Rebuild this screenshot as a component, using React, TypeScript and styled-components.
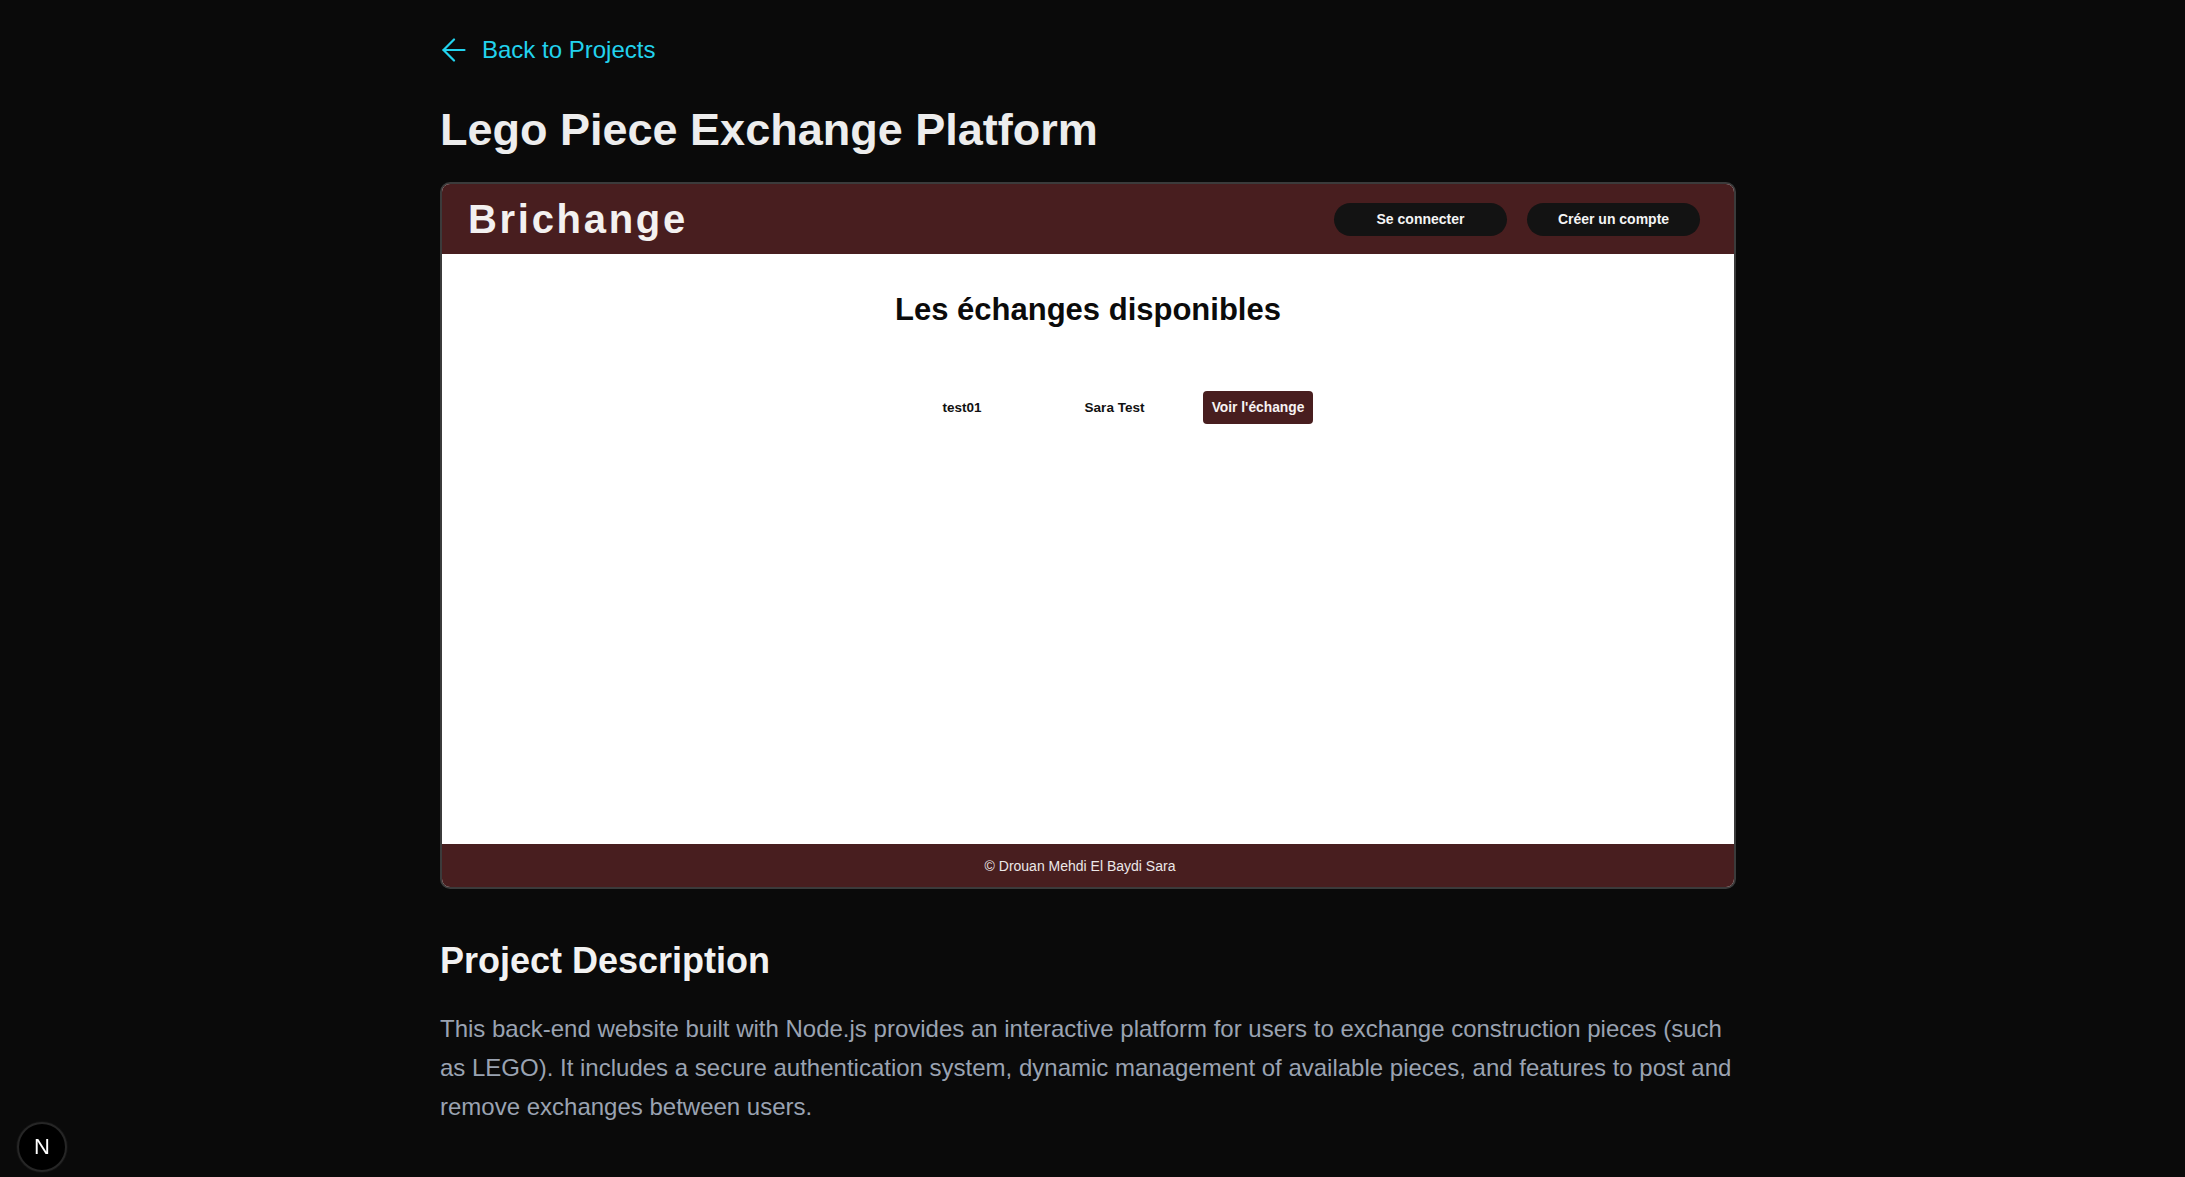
import React from "react";
import styled, { createGlobalStyle } from "styled-components";

const Global = createGlobalStyle`
  html, body { margin: 0; padding: 0; background: #0a0a0a; }
  body { font-family: "Liberation Sans", Arial, sans-serif; color: #ededed; }
  * { box-sizing: border-box; }
`;

const Page = styled.div`
  min-height: 1177px;
  padding: 33px 0 40px 440px;
  background: #0a0a0a;
`;

const Main = styled.main`
  width: 1296px;
  display: flex;
  flex-direction: column;
`;

const BackLink = styled.a`
  display: inline-flex;
  align-items: center;
  gap: 16px;
  align-self: flex-start;
  color: #22d3ee;
  font-size: 24px;
  line-height: 33px;
  text-decoration: none;
  cursor: pointer;
  svg { margin-left: 2px; }
`;

const Title = styled.h1`
  margin: 40px 0 28px;
  font-size: 45px;
  line-height: 48px;
  font-weight: 700;
  color: #ededed;
`;

const Preview = styled.div`
  width: 1296px;
  height: 707px;
  border: 2px solid #3b3b3b;
  border-radius: 10px;
  overflow: hidden;
  display: flex;
  flex-direction: column;
  background: #ffffff;
`;

const SiteHeader = styled.header`
  height: 70px;
  background: #481e1f;
  display: flex;
  align-items: center;
  justify-content: space-between;
  padding: 0 34px 0 26px;
`;

const Logo = styled.div`
  font-size: 40px;
  font-weight: 700;
  letter-spacing: 2.7px;
  color: #f3f1f0;
`;

const Nav = styled.nav`
  display: flex;
  gap: 20px;
`;

const PillButton = styled.button`
  width: 173px;
  height: 33px;
  border: none;
  border-radius: 17px;
  background: #131313;
  color: #f5f5f5;
  font-family: "Liberation Sans", Arial, sans-serif;
  font-size: 14px;
  font-weight: 700;
  cursor: pointer;
`;

const SiteBody = styled.section`
  flex: 1;
  background: #ffffff;
  padding-top: 37px;
  display: flex;
  flex-direction: column;
  align-items: center;
`;

const SiteTitle = styled.h2`
  margin: 0;
  font-size: 31px;
  line-height: 38px;
  font-weight: 700;
  color: #0b0b0b;
`;

const ExchangeRow = styled.div`
  margin-top: 62px;
  display: grid;
  grid-template-columns: 153px 152px 135px;
  justify-items: center;
  align-items: center;
  padding-left: 35px;
  font-size: 13.5px;
  font-weight: 700;
  color: #111;
`;

const Cell = styled.span``;

const ViewButton = styled.button`
  height: 33px;
  padding: 0 9px;
  border: none;
  border-radius: 4px;
  background: #481e1f;
  color: #f7f3f3;
  font-family: "Liberation Sans", Arial, sans-serif;
  font-size: 13.8px;
  font-weight: 700;
  cursor: pointer;
`;

const SiteFooter = styled.footer`
  height: 43px;
  background: #481e1f;
  color: #ece8e8;
  font-size: 14px;
  display: flex;
  align-items: center;
  justify-content: center;
  padding-right: 16px;
`;

const SectionTitle = styled.h2`
  margin: 52px 0 28px;
  font-size: 36px;
  line-height: 40px;
  font-weight: 700;
  color: #f2f2f2;
`;

const Description = styled.p`
  margin: 0;
  font-size: 24px;
  line-height: 39px;
  color: #9aa3b2;
`;

const DevBadge = styled.div`
  position: fixed;
  left: 17px;
  bottom: 5px;
  width: 50px;
  height: 50px;
  border-radius: 50%;
  background: #000;
  border: 2px solid #262626;
  box-shadow: 0 0 0 1px #111;
  display: flex;
  align-items: center;
  justify-content: center;
  color: #fff;
  font-size: 22px;
  font-weight: 400;
`;

export default function App() {
  return (
    <>
      <Global />
      <Page>
        <Main>
          <BackLink>
            <svg width="24" height="24" viewBox="0 0 24 24" fill="none" stroke="currentColor" strokeWidth="2.2" strokeLinecap="round" strokeLinejoin="round">
              <path d="M22.5 12H1.5" />
              <path d="M12 22.5 1.5 12 12 1.5" />
            </svg>
            Back to Projects
          </BackLink>
          <Title>Lego Piece Exchange Platform</Title>
          <Preview>
            <SiteHeader>
              <Logo>Brichange</Logo>
              <Nav>
                <PillButton>Se connecter</PillButton>
                <PillButton>Créer un compte</PillButton>
              </Nav>
            </SiteHeader>
            <SiteBody>
              <SiteTitle>Les échanges disponibles</SiteTitle>
              <ExchangeRow>
                <Cell>test01</Cell>
                <Cell>Sara Test</Cell>
                <ViewButton>Voir l'échange</ViewButton>
              </ExchangeRow>
            </SiteBody>
            <SiteFooter>© Drouan Mehdi El Baydi Sara</SiteFooter>
          </Preview>
          <SectionTitle>Project Description</SectionTitle>
          <Description>
            This back-end website built with Node.js provides an interactive platform for users to exchange construction pieces (such as LEGO). It includes a secure authentication system, dynamic management of available pieces, and features to post and remove exchanges between users.
          </Description>
        </Main>
      </Page>
      <DevBadge>N</DevBadge>
    </>
  );
}
